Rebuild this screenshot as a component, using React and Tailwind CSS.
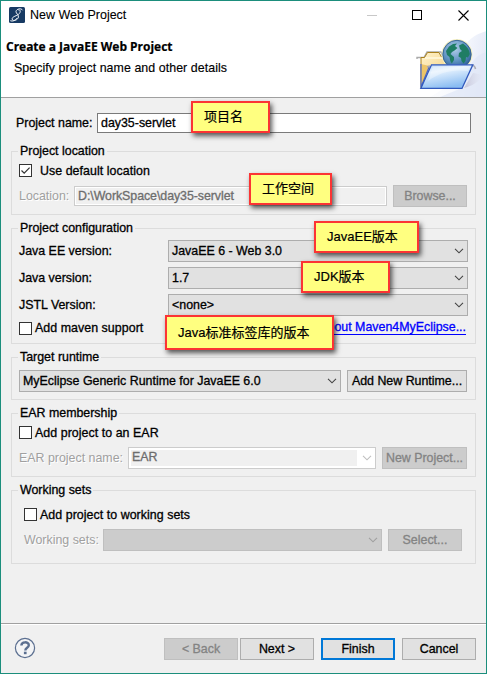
import React from "react";

const stroke = "[-webkit-text-stroke:0.3px_currentColor]";

function Chevron({ className = "text-[#444]" }) {
  return (
    <svg width="10" height="6" viewBox="0 0 10 6" className={`shrink-0 ${className}`}>
      <path d="M1 .8 L5 4.8 L9 .8" fill="none" stroke="currentColor" strokeWidth="1.1" />
    </svg>
  );
}

function Combo({ children, disabled, className = "" }) {
  return (
    <div
      className={`flex h-[22px] items-center justify-between border pl-[3px] pr-[3px] ${
        disabled ? "border-[#bfbfbf] bg-[#cccccc]" : "border-[#adadad] bg-[#e1e1e1]"
      } ${className}`}
    >
      <span>{children}</span>
      <Chevron className={disabled ? "text-[#a0a0a0]" : "text-[#444]"} />
    </div>
  );
}

function Button({ children, disabled, primary, className = "w-[74px]" }) {
  const look = disabled
    ? "border border-[#bfbfbf] bg-[#cccccc] text-[#838383]"
    : primary
      ? "border-2 border-[#0078d7] bg-[#e1e1e1]"
      : "border border-[#adadad] bg-[#e1e1e1]";
  return (
    <button className={`flex h-[22px] shrink-0 items-center justify-center ${look} ${className}`}>
      {children}
    </button>
  );
}

function Check({ label, checked, gap = "gap-[3px]" }) {
  return (
    <label className={`flex h-[13px] items-center ${gap}`}>
      <span className="flex size-[13px] shrink-0 items-center justify-center border border-[#333] bg-white">
        {checked && (
          <svg width="11" height="11" viewBox="0 0 11 11">
            <path d="M1.5 5.5 L4.2 8.2 L9.6 2.6" fill="none" stroke="#333" strokeWidth="1.2" />
          </svg>
        )}
      </span>
      <span className="tracking-[0.05px]">{label}</span>
    </label>
  );
}

function Group({ title, className, children }) {
  return (
    <fieldset className={`relative ml-[10px] w-[465px] border border-[#dcdcdc] ${className}`}>
      <span className="absolute -top-[8px] left-[6px] bg-[#f0f0f0] px-[2px] leading-[15px]">{title}</span>
      {children}
    </fieldset>
  );
}

function Note({ children, className }) {
  return (
    <div
      className={`absolute flex items-center whitespace-nowrap border-2 border-[#fb3434] bg-[#ffff80] pl-[11px] text-[13px] text-black shadow-[2px_3px_5px_rgba(0,0,0,0.65)] [-webkit-text-stroke:0.2px_currentColor] ${className}`}
    >
      {children}
    </div>
  );
}

const etched = "text-[#a0a0a0] [text-shadow:1px_1px_0_#fff] [-webkit-text-stroke:0px]";

function AppIcon() {
  return (
    <svg width="16" height="16" viewBox="0 0 16 16">
      <rect width="16" height="16" rx="1.5" fill="#173a63" />
      <path
        d="M13.6 3.3 C12.5 .8 7.2 1.7 7 4.6 C6.9 6.6 9.8 7.3 9.4 10 C8.9 13.5 3.4 14.7 3.1 12 C2.9 9.4 8.3 9 10.4 6.5 C12 4.6 11 2.2 9.3 3 M1.3 13.7 C3.5 14.7 6.5 13.6 7.8 11.2"
        fill="none"
        stroke="#eef3f8"
        strokeWidth="1"
      />
    </svg>
  );
}

function Banner() {
  return (
    <svg width="77" height="67" viewBox="410 30 77 67" className="shrink-0">
      <defs>
        <linearGradient id="haze" x1="0" y1="0" x2="1" y2="0.2">
          <stop offset="0" stopColor="#fff" />
          <stop offset="0.6" stopColor="#f6f8fd" />
          <stop offset="1" stopColor="#e6ebf8" />
        </linearGradient>
        <linearGradient id="front" x1="0" y1="0" x2="0.4" y2="1">
          <stop offset="0" stopColor="#b8d4f6" />
          <stop offset="0.35" stopColor="#e6f2fe" />
          <stop offset="1" stopColor="#8bbdf2" />
        </linearGradient>
        <linearGradient id="back" x1="0" y1="0" x2="1" y2="1">
          <stop offset="0" stopColor="#fff3cd" />
          <stop offset="1" stopColor="#f1c66b" />
        </linearGradient>
        <radialGradient id="globe" cx="0.42" cy="0.3" r="0.75">
          <stop offset="0" stopColor="#b3cfea" />
          <stop offset="0.6" stopColor="#5b8fc0" />
          <stop offset="1" stopColor="#27588f" />
        </radialGradient>
        <linearGradient id="cast" x1="0" y1="0" x2="1" y2="0">
          <stop offset="0" stopColor="#a9a2bb" />
          <stop offset="1" stopColor="#e3e5f2" stopOpacity="0.2" />
        </linearGradient>
      </defs>
      <path d="M487 31 C478 33 470 38 464 46 L458 80 L430 97 H487Z" fill="url(#haze)" />
      <path d="M487 52 C477 54 472 61 470 68 L462 88 L440 97 H487Z" fill="#dfe7f7" opacity="0.7" />
      <path d="M464 88 L473 73 C482 74 486 77 479 80 C476 84 468 87 464 88Z" fill="url(#cast)" opacity="0.55" />
      <path d="M417 59 V57.5 H424 L427 52 H441 L443 57 H446" fill="none" stroke="#aaa" strokeWidth="1.4" />
      <path d="M421 88 V57.5 H424.5 L427.5 52.5 H439 L441.5 57 H454 V88Z" fill="url(#back)" stroke="#a9801d" strokeWidth="1" />
      <path d="M425 58 H444" stroke="#fff9df" strokeWidth="1.5" />
      <circle cx="457" cy="54.5" r="15.5" fill="#f6f1c4" />
      <circle cx="457" cy="54.5" r="14.2" fill="url(#globe)" stroke="#315e8e" strokeWidth="0.9" />
      <path
        d="M446 51 L449 46.5 L453 44 L457 43.5 L455 46 L457.5 48 L454.5 50.5 L452 52 L450.5 54 L454 57 L454 60 L451.8 63.5 L450.3 61 L449.5 57 L447 55Z"
        fill="#1f7d64"
      />
      <path
        d="M459 45.5 L463 43.5 C467 46 469.5 50 469.8 54 L468 57.5 L466 57 L465.5 61 L463.5 63.5 L461.5 61 L461 58 L458.5 56.5 L459 53 L462 51 L460 49Z"
        fill="#1f7d64"
      />
      <path d="M421 64 V87 L429.5 66" fill="#edc568" stroke="#4e69c4" strokeWidth="1.2" />
      <path d="M427 67 L430 66 M471 65 C474 65 475 66 475.5 69" fill="none" stroke="#a9a9b2" strokeWidth="1.6" />
      <path d="M431.5 64.8 H472.8 L462 88.4 H420.8Z" fill="url(#front)" stroke="#3159bd" strokeWidth="1.3" />
      <path d="M433 66.5 H470 L468 71 C453 69 440 72 428 81Z" fill="#fff" opacity="0.33" />
    </svg>
  );
}

export default function App() {
  return (
    <div
      className={`relative flex h-[674px] w-[487px] flex-col overflow-hidden border border-[#1b8e7c] bg-[#f0f0f0] font-['Liberation_Sans','Noto_Sans_CJK_SC',sans-serif] text-[12.4px] leading-[16px] whitespace-nowrap text-black ${stroke}`}
    >
      <header className="relative h-[97px] shrink-0 border-b border-[#a0a0a0] bg-white">
        <div className="absolute right-[-1px] bottom-0">
          <Banner />
        </div>
        <div className="relative flex h-[28px] items-center pl-[8px]">
          <AppIcon />
          <span className="ml-[5px] text-[12.5px] [-webkit-text-stroke:0.1px]">New Web Project</span>
          <div className="ml-auto flex items-center gap-[35px] pr-[17px]">
            <span className="h-px w-[10px] bg-[#c8c8c8]" />
            <span className="size-[10px] border border-black" />
            <svg width="11" height="11" viewBox="0 0 11 11" className="ml-px">
              <path d="M.5 .5 L10.5 10.5 M10.5 .5 L.5 10.5" stroke="#000" strokeWidth="1.1" />
            </svg>
          </div>
        </div>
        <h1 className="relative mt-[10px] pl-[5px] font-['Open_Sans'] text-[12px] font-bold tracking-[-0.02px] [-webkit-text-stroke:0.2px]">
          Create a JavaEE Web Project
        </h1>
        <p className="relative mt-[5px] pl-[13px] tracking-[0.06px] [-webkit-text-stroke:0.15px]">
          Specify project name and other details
        </p>
      </header>

      <main className="flex flex-col">
        <div className="mt-[15px] flex items-center pl-[15px]">
          <span className="w-[81px]">Project name:</span>
          <div className="flex h-[20px] w-[374px] items-center border border-[#7a7a7a] bg-white pl-[3px]">day35-servlet</div>
        </div>

        <Group title="Project location" className="mt-[18px] h-[64px] pt-[12px] pl-[7px]">
          <Check label="Use default location" checked gap="gap-[8px]" />
          <div className="mt-[8px] flex items-center">
            <span className={`w-[55px] ${etched}`}>Location:</span>
            <div className="flex h-[20px] w-[313px] items-center border border-[#cccccc] pl-[3px] tracking-[-0.06px] text-[#6d6d6d] outline outline-1 -outline-offset-2 outline-white">
              D:\WorkSpace\day35-servlet
            </div>
            <div className="ml-[6px]">
              <Button disabled>Browse...</Button>
            </div>
          </div>
        </Group>

        <Group title="Project configuration" className="mt-[13px] h-[116px] pt-[11px] pl-[7px]">
          <div className="flex flex-col gap-[5px]">
            <div className="flex items-center">
              <span className="w-[149px]">Java EE version:</span>
              <Combo className="w-[300px]">JavaEE 6 - Web 3.0</Combo>
            </div>
            <div className="flex items-center">
              <span className="w-[149px]">Java version:</span>
              <Combo className="w-[300px]">1.7</Combo>
            </div>
            <div className="flex items-center">
              <span className="w-[149px]">JSTL Version:</span>
              <Combo className="w-[300px]">&lt;none&gt;</Combo>
            </div>
          </div>
          <div className="mt-[5px] flex w-[447px] items-center justify-between">
            <Check label="Add maven support" />
            <a className="h-[14px] border-b border-[#0000ff] leading-[13px] text-[#0000ff]">About Maven4MyEclipse...</a>
          </div>
        </Group>

        <Group title="Target runtime" className="mt-[13px] flex h-[43px] items-start gap-[6px] pt-[12px] pl-[7px]">
          <Combo className="w-[322px]">MyEclipse Generic Runtime for JavaEE 6.0</Combo>
          <Button className="w-[120px]">Add New Runtime...</Button>
        </Group>

        <Group title="EAR membership" className="mt-[13px] h-[64px] pt-[12px] pl-[7px]">
          <Check label="Add project to an EAR" />
          <div className="mt-[8px] flex items-center">
            <span className={`w-[109px] ${etched}`}>EAR project name:</span>
            <div className="flex h-[22px] w-[248px] items-center border border-[#cccccc] bg-white p-[2px] pr-[3px]">
              <span className="h-[16px] w-[226px] bg-[#f0f0f0] pl-px text-[#6d6d6d] leading-[15px]">EAR</span>
              <span className="ml-auto">
                <Chevron className="text-[#bfbfbf]" />
              </span>
            </div>
            <div className="ml-[6px]">
              <Button disabled className="w-[85px]">New Project...</Button>
            </div>
          </div>
        </Group>

        <Group title="Working sets" className="mt-[13px] h-[74px] pt-[17px] pl-[12px]">
          <Check label="Add project to working sets" />
          <div className="mt-[8px] flex items-center">
            <span className={`w-[79px] ${etched}`}>Working sets:</span>
            <Combo disabled className="w-[279px]" />
            <div className="ml-[6px]">
              <Button disabled>Select...</Button>
            </div>
          </div>
        </Group>
      </main>

      <footer className="mt-auto flex h-[50px] shrink-0 border-t border-[#a0a0a0] shadow-[inset_0_1px_0_#fff] pt-[14px]">
        <svg width="22" height="22" viewBox="0 0 22 22" className="-mt-px ml-[13px]">
          <circle cx="11" cy="11" r="9.6" fill="#f3f4f6" stroke="#5b6f90" strokeWidth="1.2" />
          <path
            d="M7.4 8.6 C7.4 4.3 14.8 4.3 14.8 8.2 C14.8 10.8 11.3 10.7 11.3 13.4"
            fill="none"
            stroke="#5b6f90"
            strokeWidth="2.4"
          />
          <rect x="9.9" y="14.7" width="2.7" height="2.5" fill="#5b6f90" />
        </svg>
        <div className="ml-auto flex pr-[10px]">
          <Button disabled>&lt; Back</Button>
          <div className="ml-[2px] flex gap-[7px]">
            <Button>Next &gt;</Button>
            <Button primary>Finish</Button>
            <Button>Cancel</Button>
          </div>
        </div>
      </footer>

      <Note className="top-[100px] left-[190px] h-[32px] w-[79px]">项目名</Note>
      <Note className="top-[172px] left-[248px] h-[32px] w-[83px]">工作空间</Note>
      <Note className="top-[220px] left-[313px] h-[32px] w-[105px]">JavaEE版本</Note>
      <Note className="top-[260px] left-[300px] h-[32px] w-[89px]">JDK版本</Note>
      <Note className="top-[314px] left-[164px] h-[35px] w-[169px]">Java标准标签库的版本</Note>
    </div>
  );
}
